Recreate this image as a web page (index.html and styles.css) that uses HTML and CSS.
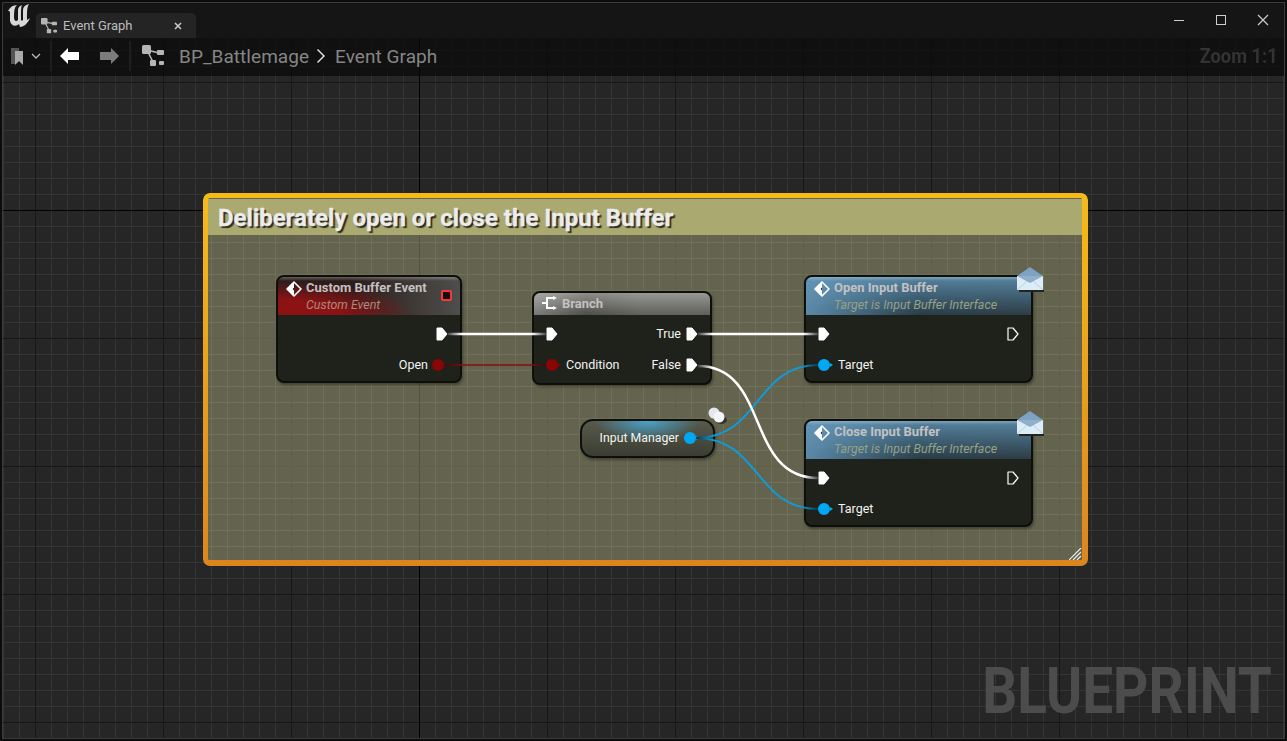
FILE: index.html
```html
<!DOCTYPE html>
<html lang="en">
  <head>
    <meta charset="UTF-8" />
    <title>Event Graph</title>
    <link rel="stylesheet" href="styles.css">
  </head>
  <body>
    <svg class="defs" width="0" height="0">
      <defs>
        <symbol id="graph-icon" viewBox="0 0 22 22">
          <path d="M5 5 L17 8 M5 5 L11 17" stroke="currentColor" stroke-width="1.6" fill="none" />
          <rect x="0" y="0" width="9" height="9" rx="1.5" fill="currentColor" />
          <rect x="15" y="5" width="7" height="5" rx="1" fill="currentColor" />
          <rect x="8" y="15" width="6" height="6" rx="1" fill="currentColor" />
          <rect x="17" y="16" width="5" height="4" rx="1" fill="currentColor" />
        </symbol>
        <symbol id="func-icon" viewBox="0 0 16 16">
          <path d="M8 1 L15 8 L8 15 L1 8 Z" fill="none" stroke="#fff" stroke-width="1.6" stroke-linejoin="round" />
          <path d="M8 1 L1 8 L8 15 Z" fill="#fff" />
          <path d="M8 6.5 L6.5 8 L8 9.500 Z" fill="#222" />
        </symbol>
        <symbol id="exec-pin" viewBox="0 0 12 14">
          <path d="M1 1 H6 L11 7 L6 13 H1 Z" fill="#fff" stroke="#fff" stroke-linejoin="round" />
        </symbol>
        <symbol id="exec-pin-open" viewBox="0 0 12 14">
          <path d="M1 1 H6 L11 7 L6 13 H1 Z" fill="none" stroke="#fff" stroke-width="1.2" stroke-linejoin="round" />
        </symbol>
        <symbol id="mail-icon" viewBox="0 0 28 26">
          <path d="M1 10 L14 1 L27 10 L27 13 L1 13 Z" fill="#7ea3c2" />
          <rect x="1" y="10" width="26" height="14" fill="#dcecf8" />
          <path d="M1 10 L14 17 L27 10" fill="#8fb0cb" />
          <path d="M1 24 L11 15 M27 24 L17 15" stroke="#b9cfe0" stroke-width="1" />
          <rect x="3" y="24" width="26" height="2" fill="#23241c" />
        </symbol>
      </defs>
    </svg>

    <div class="window">
      <header class="titlebar">
        <svg class="ue-logo" width="24" height="24" viewBox="0 0 24 24">
          <path d="M1 7 C3 3 6 1 10 1 C8 3 7 5 7 13 C7 17 9 18 11 16 L11 6 C11 4 12 2 15 1 C14 3 14 6 14 15 C14 17 15 17 16 16 L16 6 C16 3 18 1 22 0 C20 3 20 7 20 16 L23 14 C21 19 17 23 13 23 L12 20 C9 23 4 22 3 17 L3 9 C3 7 2 7 1 7 Z" fill="#d8d8d8" />
        </svg>
        <div class="tab">
          <svg class="tab-icon" width="16" height="16"><use href="#graph-icon" /></svg>
          <span>Event Graph</span>
          <svg class="tab-close" width="8" height="8" viewBox="0 0 8 8">
            <path d="M1 1 L7 7 M7 1 L1 7" stroke="#ccc" stroke-width="1.500" />
          </svg>
        </div>
        <div class="win-controls">
          <svg width="12" height="12" viewBox="0 0 12 12"><path d="M1 6.500 H11" stroke="#ccc" /></svg>
          <svg width="12" height="12" viewBox="0 0 12 12"><rect x="1.500" y="1.500" width="9" height="9" fill="none" stroke="#ccc" /></svg>
          <svg width="12" height="12" viewBox="0 0 12 12"><path d="M1 1 L11 11 M11 1 L1 11" stroke="#ccc" stroke-width="1.200" /></svg>
        </div>
      </header>

      <main class="graph">
        <nav class="crumbs">
          <svg class="bookmark" width="12" height="18" viewBox="0 0 12 18">
            <path d="M0 1 H8 V14 L4 17 H0 Z" fill="#555" />
            <path d="M4 4 H12 V18 L8 14 L4 18 Z" fill="#aaa" />
          </svg>
          <svg class="chev" width="10" height="6" viewBox="0 0 10 6">
            <path d="M1 1 L5 5 L9 1" fill="none" stroke="#bbb" stroke-width="1.300" />
          </svg>
          <span class="sep"></span>
          <svg class="nav-back" width="20" height="16" viewBox="0 0 20 16"><path d="M0 8 L8 0 V4 H19 V12 H8 V16 Z" fill="#fff" /></svg>
          <svg class="nav-fwd" width="20" height="16" viewBox="0 0 20 16"><path d="M20 8 L12 0 V4 H1 V12 H12 V16 Z" fill="#7c7c7c" /></svg>
          <span class="sep"></span>
          <svg class="crumb-icon" width="22" height="22"><use href="#graph-icon" /></svg>
          <span class="crumb">BP_Battlemage</span>
          <svg class="crumb-arrow" width="10" height="16" viewBox="0 0 10 16">
            <path d="M1.500 1.500 L8 8 L1.500 14.500" fill="none" stroke="#eee" stroke-width="1.400" />
          </svg>
          <span class="crumb">Event Graph</span>
          <span class="zoom-level">Zoom 1:1</span>
        </nav>

        <section class="comment">
          <h2>Deliberately open or close the Input Buffer</h2>
          <svg class="grip" width="13" height="12" viewBox="0 0 13 12">
            <path d="M0 12 L12 0 M4 12 L12 4 M8 12 L12 8" stroke="#eee" stroke-width="1.200" />
          </svg>
        </section>

        <article class="node node-event">
          <div class="node-head head-red">
            <svg class="head-icon" width="16" height="16"><use href="#func-icon" /></svg>
            <div>
              <div class="node-title">Custom Buffer Event</div>
              <div class="node-sub">Custom Event</div>
            </div>
            <span class="delegate"></span>
          </div>
          <div class="node-body">
            <div class="row row-end">
              <svg class="exec" width="12" height="14"><use href="#exec-pin" /></svg>
            </div>
            <div class="row row-end">
              <span>Open</span>
              <span class="pin pin-red pin-out"></span>
            </div>
          </div>
        </article>

        <article class="node node-branch">
          <div class="node-head head-gray">
            <svg class="head-icon" width="16" height="14" viewBox="0 0 16 14">
              <path d="M0 7 H5 M11 2 H5 V12 H11" fill="none" stroke="#fff" stroke-width="2" />
              <path d="M11 0 L15 2 L11 4 Z M11 10 L15 12 L11 14 Z" fill="#fff" />
            </svg>
            <div class="node-title">Branch</div>
          </div>
          <div class="node-body">
            <div class="row row-split">
              <svg class="exec" width="12" height="14"><use href="#exec-pin" /></svg>
              <span class="out">True <svg class="exec" width="12" height="14"><use href="#exec-pin" /></svg></span>
            </div>
            <div class="row row-split">
              <span class="in"><span class="pin pin-red"></span> Condition</span>
              <span class="out">False <svg class="exec" width="12" height="14"><use href="#exec-pin" /></svg></span>
            </div>
          </div>
        </article>

        <article class="node-var">
          <span>Input Manager</span>
          <span class="pin pin-blue"></span>
          <svg class="balls" width="20" height="20" viewBox="0 0 20 20">
            <ellipse cx="14" cy="14" rx="6" ry="4" fill="#33342a" />
            <circle cx="7" cy="7" r="5.500" fill="#e4e7ee" />
            <circle cx="12" cy="11" r="5.500" fill="#f4f5fa" />
          </svg>
        </article>

        <article class="node node-call node-open">
          <div class="node-head head-blue">
            <svg class="head-icon" width="16" height="16"><use href="#func-icon" /></svg>
            <div>
              <div class="node-title">Open Input Buffer</div>
              <div class="node-sub sub-blue">Target is Input Buffer Interface</div>
            </div>
          </div>
          <svg class="mail" width="28" height="26"><use href="#mail-icon" /></svg>
          <div class="node-body">
            <div class="row row-split">
              <svg class="exec" width="12" height="14"><use href="#exec-pin" /></svg>
              <svg class="exec" width="12" height="14"><use href="#exec-pin-open" /></svg>
            </div>
            <div class="row">
              <span class="in"><span class="pin pin-blue"></span> Target</span>
            </div>
          </div>
        </article>

        <article class="node node-call node-close">
          <div class="node-head head-blue">
            <svg class="head-icon" width="16" height="16"><use href="#func-icon" /></svg>
            <div>
              <div class="node-title">Close Input Buffer</div>
              <div class="node-sub sub-blue">Target is Input Buffer Interface</div>
            </div>
          </div>
          <svg class="mail" width="28" height="26"><use href="#mail-icon" /></svg>
          <div class="node-body">
            <div class="row row-split">
              <svg class="exec" width="12" height="14"><use href="#exec-pin" /></svg>
              <svg class="exec" width="12" height="14"><use href="#exec-pin-open" /></svg>
            </div>
            <div class="row">
              <span class="in"><span class="pin pin-blue"></span> Target</span>
            </div>
          </div>
        </article>

        <!-- viewBox uses window coordinates so wire points read straight off the screen -->
        <svg class="wires" viewBox="3 38 1281 700">
          <defs>
            <linearGradient id="w1" gradientUnits="userSpaceOnUse" x1="448" y1="0" x2="546" y2="0">
              <stop offset="0" stop-color="#444" /><stop offset=".14" stop-color="#fff" /><stop offset=".86" stop-color="#fff" /><stop offset="1" stop-color="#444" />
            </linearGradient>
            <linearGradient id="w2" gradientUnits="userSpaceOnUse" x1="698" y1="0" x2="818" y2="0">
              <stop offset="0" stop-color="#444" /><stop offset=".12" stop-color="#fff" /><stop offset=".88" stop-color="#fff" /><stop offset="1" stop-color="#444" />
            </linearGradient>
            <linearGradient id="w3" gradientUnits="userSpaceOnUse" x1="444" y1="0" x2="546" y2="0">
              <stop offset="0" stop-color="#3a0808" /><stop offset=".16" stop-color="#860d0d" /><stop offset=".86" stop-color="#860d0d" /><stop offset="1" stop-color="#3a0808" />
            </linearGradient>
            <linearGradient id="w4" gradientUnits="userSpaceOnUse" x1="696" y1="0" x2="818" y2="0">
              <stop offset="0" stop-color="#0a3a50" /><stop offset=".14" stop-color="#0f9ad8" /><stop offset=".86" stop-color="#0f9ad8" /><stop offset="1" stop-color="#0a3a50" />
            </linearGradient>
          </defs>
          <path d="M448 334 H546" stroke="url(#w1)" stroke-width="2.500" fill="none" />
          <path d="M698 334 H818" stroke="url(#w2)" stroke-width="2.500" fill="none" />
          <path d="M444 365 H546" stroke="url(#w3)" stroke-width="1.500" fill="none" />
          <path d="M696 438 C760 438 755 365 818 365" stroke="url(#w4)" stroke-width="2" fill="none" />
          <path d="M696 438 C760 438 755 509 818 509" stroke="url(#w4)" stroke-width="2" fill="none" />
          <path d="M698 366 C770 366 745 478 818 478" stroke="url(#w2)" stroke-width="2.500" fill="none" />
        </svg>

        <div class="watermark">BLUEPRINT</div>
      </main>
    </div>
  </body>
</html>
```

FILE: styles.css
```css
* {
  box-sizing: border-box;
}

html,
body {
  height: 100%;
}

body {
  margin: 0;
  padding: 2px;
  background: #0c0c0c;
  font-family: Roboto, "Liberation Sans", sans-serif;
  overflow: hidden;
}

.defs {
  position: absolute;
}

.window {
  display: flex;
  flex-direction: column;
  height: 100%;
  border: 1px solid #3a3a3a;
}

.titlebar {
  display: flex;
  align-items: flex-end;
  flex: 0 0 35px;
  background: #151515;
}

.ue-logo {
  margin: 0 5px 10px 4px;
  align-self: flex-end;
}

.tab {
  display: flex;
  align-items: center;
  width: 160px;
  height: 25px;
  padding: 0 14px 0 5px;
  background: #242424;
  border-radius: 5px 5px 0 0;
  color: #bdbdbd;
  font-size: 13px;
}

.tab-icon {
  margin-right: 6px;
  color: #b5b5b5;
}

.tab-close {
  margin-left: auto;
}

.win-controls {
  display: flex;
  gap: 30px;
  margin-left: auto;
  padding: 0 15px 12px 0;
}

.graph {
  position: relative;
  flex: 1;
  overflow: hidden;
  background-color: #262626;
  background-image:
    linear-gradient(to right, #000 1px, transparent 1px),
    linear-gradient(to bottom, #000 1px, transparent 1px),
    linear-gradient(to right, #171717 1px, transparent 1px),
    linear-gradient(to bottom, #171717 1px, transparent 1px),
    linear-gradient(to right, #353535 1px, transparent 1px),
    linear-gradient(to bottom, #353535 1px, transparent 1px);
  background-size:
    1px 100%,
    100% 1px,
    128px 128px,
    128px 128px,
    16px 16px,
    16px 16px;
  background-position:
    416px 0,
    0 172px,
    32px 44px,
    32px 44px,
    0 12px,
    0 12px;
  background-repeat: no-repeat, no-repeat, repeat, repeat, repeat, repeat;
}

.crumbs {
  display: flex;
  align-items: center;
  height: 38px;
  padding: 0 6px 2px 8px;
  background: rgba(8, 8, 8, 0.72);
  color: #868686;
  font-size: 19px;
  letter-spacing: 0.05px;
}

.bookmark {
  margin-right: 8px;
}

.chev {
  margin-right: 9px;
}

.sep {
  width: 2px;
  height: 30px;
  margin-right: 8px;
  background: #1e1e1e;
}

.nav-back {
  margin-right: 19px;
}

.nav-fwd {
  margin-right: 10px;
}

.crumb-icon {
  margin: 0 15px 0 3px;
  color: #b5b5b5;
}

.crumb-arrow {
  margin: 0 9px 0 7px;
}

.zoom-level {
  margin-left: auto;
  color: #333;
  font-size: 21px;
  font-weight: 700;
  letter-spacing: 0;
  transform: scaleX(0.87);
  transform-origin: right center;
}

.comment {
  position: absolute;
  left: 200px;
  top: 155px;
  width: 885px;
  height: 373px;
  padding: 6px 5px 6px 5px;
  border-radius: 7px;
  background-color: rgba(168, 168, 124, 0.48);
  background-image:
    linear-gradient(to right, rgba(255, 255, 255, 0.025) 1px, transparent 1px),
    linear-gradient(to bottom, rgba(255, 255, 255, 0.025) 1px, transparent 1px);
  background-size: 16px 16px;
  background-position: 8px 1px;
}

.comment::before {
  content: "";
  position: absolute;
  inset: 0;
  padding: 5px 6px 6px 5px;
  border-radius: 7px;
  background: linear-gradient(#f7bb18, #dc851f);
  mask: linear-gradient(#000 0 0) content-box exclude, linear-gradient(#000 0 0);
}

.comment h2 {
  margin: 0;
  height: 36px;
  padding-left: 10px;
  background: #a9a970;
  color: #ececec;
  font-size: 24px;
  font-weight: 700;
  line-height: 38px;
  text-shadow: 2px 2px 1px #2c2c22;
  -webkit-text-stroke: 0.3px #ececec;
}

.grip {
  position: absolute;
  right: 6px;
  bottom: 6px;
}

.node {
  position: absolute;
  display: flex;
  flex-direction: column;
  border: 2px solid #0e0f0b;
  border-radius: 8px;
  background: #1f211b;
  box-shadow: 1px 2px 3px rgba(0, 0, 0, 0.35);
  color: #f2f2f2;
  font-size: 12.500px;
}

.node-event {
  left: 273px;
  top: 237px;
  width: 186px;
  height: 108px;
}

.node-branch {
  left: 529px;
  top: 253px;
  width: 180px;
  height: 94px;
}

.node-call {
  left: 801px;
  width: 229px;
  height: 108px;
}

.node-open {
  top: 237px;
}

.node-close {
  top: 381px;
}

.node-head {
  display: flex;
  align-items: flex-start;
  height: 38px;
  padding: 2px 8px 0 8px;
  border-radius: 6px 6px 0 0;
}

.head-icon {
  flex: none;
  margin: 2px 4px 0 0;
}

.head-red {
  background:
    linear-gradient(to bottom, rgba(255, 255, 255, 0.28), transparent 4px),
    radial-gradient(ellipse 75% 90% at 0 100%, #8d1214 45%, rgba(141, 18, 20, 0) 100%),
    linear-gradient(to right, #2a1d1b 40%, #4e4e4c);
}

.head-blue {
  background:
    linear-gradient(to bottom, rgba(255, 255, 255, 0.25), transparent 4px),
    linear-gradient(to bottom, rgba(100, 155, 190, 0.75), transparent 100%),
    linear-gradient(to right, #5a88a6, #283c48 50%, #2d3c45);
}

.head-gray {
  height: 22px;
  padding-top: 2px;
  background:
    linear-gradient(to right, rgba(255, 255, 255, 0.25), transparent 30%, rgba(255, 255, 255, 0.1) 60%),
    linear-gradient(to bottom, #8c8c88, #4c4c48);
}

.head-gray .head-icon {
  margin-top: 1px;
}

.node-title {
  color: #c4c1c1;
  font-size: 13px;
  font-weight: 700;
  line-height: 18px;
}

.node-sub {
  margin-top: -1px;
  color: #ae8a7c;
  font-size: 12.400px;
  font-style: italic;
  line-height: 17px;
}

.sub-blue {
  color: #98a187;
}

.node-body {
  flex: 1;
  padding: 3px 12px 0;
}

.row {
  display: flex;
  align-items: center;
  height: 31px;
  line-height: 31px;
}

.row-end {
  justify-content: flex-end;
  gap: 4px;
}

.row-split {
  justify-content: space-between;
}

.in,
.out {
  display: flex;
  align-items: center;
  gap: 8px;
}

.out {
  gap: 5px;
}

.pin {
  position: relative;
  display: block;
  width: 12px;
  height: 12px;
  border-radius: 50%;
}

.pin::after {
  content: "";
  position: absolute;
  left: 12px;
  top: 4px;
  border-left: 3px solid;
  border-top: 2px solid transparent;
  border-bottom: 2px solid transparent;
  color: inherit;
}

.pin-out {
  margin-right: 4px;
}

.pin-red {
  background: #8a0505;
  color: #8a0505;
}

.pin-blue {
  background: #00a8f2;
  color: #00a8f2;
}

.delegate {
  margin: 11px 0 0 auto;
  width: 11px;
  height: 11px;
  background: #1a0a0a;
  border: 2px solid #f23a3a;
  border-radius: 2px;
}

.mail {
  position: absolute;
  right: -13px;
  top: -11px;
}

.node-var {
  position: absolute;
  left: 577px;
  top: 381px;
  display: flex;
  align-items: center;
  justify-content: flex-end;
  gap: 5px;
  width: 135px;
  height: 39px;
  padding: 0 17px 2px 0;
  border: 2px solid #0e0f0b;
  border-radius: 13px;
  background:
    radial-gradient(ellipse 40% 60% at 50% 0, rgba(70, 175, 225, 0.85), transparent),
    linear-gradient(to bottom, #565a4c, #3c3d32);
  box-shadow: 1px 2px 3px rgba(0, 0, 0, 0.35);
  color: #f2f2f2;
  font-size: 12.300px;
}

.balls {
  position: absolute;
  right: -14px;
  top: -15px;
}

.wires {
  position: absolute;
  inset: 0;
  width: 100%;
  height: 100%;
  pointer-events: none;
}

.watermark {
  position: absolute;
  right: 12px;
  bottom: 19px;
  color: #4c4c4c;
  font-size: 65px;
  font-weight: 700;
  line-height: 56px;
  transform: scaleX(0.845);
  transform-origin: right center;
}
```
